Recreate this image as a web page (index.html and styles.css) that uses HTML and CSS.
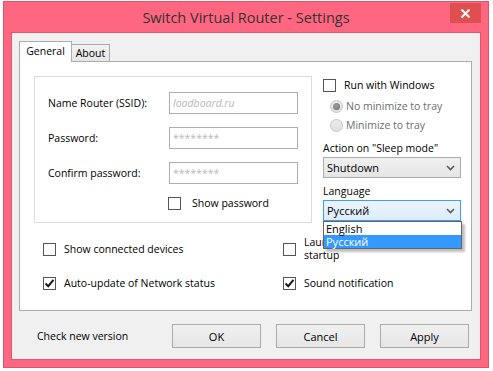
FILE: index.html
```html
<!DOCTYPE html>
<html lang="en">
<head>
  <meta charset="UTF-8" />
  <title>Switch Virtual Router - Settings</title>
  <link rel="stylesheet" href="styles.css">
</head>
<body>
  <div class="window">
    <div class="titlebar">
      <span></span>
      <span class="title">Switch Virtual Router - Settings</span>
      <button class="close-btn">
        <svg width="11" height="9" viewBox="0 0 11 9"><path d="M1.5 0.5 L9.5 8.5 M9.5 0.5 L1.5 8.5" stroke="#fff" stroke-width="2" fill="none"/></svg>
      </button>
    </div>

    <div class="client">
      <div class="tabs">
        <div class="tab active">General</div>
        <div class="tab">About</div>
      </div>

      <div class="panel">
        <div class="top-row">
          <div class="group">
            <div class="field">
              <label>Name Router (SSID):</label>
              <input type="text" class="ssid" placeholder="loadboard.ru">
            </div>
            <div class="field">
              <label>Password:</label>
              <input type="password" placeholder="********">
            </div>
            <div class="field">
              <label>Confirm password:</label>
              <input type="password" placeholder="********">
            </div>
            <div class="check show-pass">
              <span class="box"></span>
              <span>Show password</span>
            </div>
          </div>

          <div class="side">
            <div class="check">
              <span class="box"></span>
              <span>Run with Windows</span>
            </div>
            <div class="radio">
              <span class="dot checked"></span>
              <span>No minimize to tray</span>
            </div>
            <div class="radio">
              <span class="dot"></span>
              <span>Minimize to tray</span>
            </div>

            <div class="side-label">Action on "Sleep mode"</div>
            <div class="combo">
              <span>Shutdown</span>
              <svg width="9" height="6" viewBox="0 0 9 6"><path d="M1 1 L4.5 4.5 L8 1" stroke="#5a5a5a" stroke-width="1.6" fill="none"/></svg>
            </div>

            <div class="side-label lang">Language</div>
            <div class="combo-wrap">
              <div class="combo open">
                <span>Русский</span>
                <svg width="9" height="6" viewBox="0 0 9 6"><path d="M1 1 L4.5 4.5 L8 1" stroke="#5a5a5a" stroke-width="1.6" fill="none"/></svg>
              </div>
              <ul class="dropdown">
                <li>English</li>
                <li class="selected">Русский</li>
              </ul>
            </div>
          </div>
        </div>

        <div class="options">
          <div class="check">
            <span class="box"></span>
            <span>Show connected devices</span>
          </div>
          <div class="check">
            <span class="box"></span>
            <span class="launch">Launch minimized at startup</span>
          </div>
          <div class="check">
            <span class="box checked">
              <svg width="11" height="11" viewBox="0 0 11 11"><path d="M1.5 5.5 L4.2 8.2 L9.5 1.8" stroke="#1a1a1a" stroke-width="2" fill="none"/></svg>
            </span>
            <span>Auto-update of Network status</span>
          </div>
          <div class="check">
            <span class="box checked">
              <svg width="11" height="11" viewBox="0 0 11 11"><path d="M1.5 5.5 L4.2 8.2 L9.5 1.8" stroke="#1a1a1a" stroke-width="2" fill="none"/></svg>
            </span>
            <span>Sound notification</span>
          </div>
        </div>
      </div>

      <div class="footer">
        <span class="version-link">Check new version</span>
        <div class="buttons">
          <button class="btn">OK</button>
          <button class="btn">Cancel</button>
          <button class="btn">Apply</button>
        </div>
      </div>
    </div>
  </div>
</body>
</html>
```

FILE: styles.css
```css
body {
  margin: 0;
  background: #fff;
  font-family: 'Open Sans', sans-serif;
  font-size: 10.5px;
  color: #000;
}

.window {
  box-sizing: border-box;
  width: 486px;
  height: 367px;
  margin: 1px 0 0 3px;
  padding: 0 7px 7px;
  background: #ff6680;
  border: 1px solid #d9566d;
  display: flex;
  flex-direction: column;
}

.titlebar {
  height: 30px;
  display: grid;
  grid-template-columns: 1fr auto 1fr;
  align-items: center;
}

.title {
  font-size: 14.5px;
  color: #333;
  padding-top: 1px;
}

.close-btn {
  justify-self: end;
  align-self: start;
  width: 31px;
  height: 20px;
  margin-top: 1px;
  border: none;
  padding: 0;
  background: #e04f50;
  display: flex;
  align-items: center;
  justify-content: center;
}

.client {
  flex: 1;
  background: #f0f0f0;
  border: 1px solid #e0566c;
  padding: 8px 8px 0 7px;
}

/* tabs */
.tabs {
  display: flex;
  align-items: flex-end;
}

.tab {
  box-sizing: border-box;
  height: 17px;
  width: 39px;
  margin-left: -1px;
  border: 1px solid #acacac;
  border-bottom: none;
  background: linear-gradient(#f2f2f2, #e6e6e6);
  text-align: center;
  line-height: 16px;
}

.tab.active {
  position: relative;
  z-index: 1;
  height: 21px;
  width: 53px;
  margin-left: 0;
  margin-bottom: -1px;
  background: #fff;
  line-height: 18px;
}

.panel {
  box-sizing: border-box;
  height: 250px;
  background: #fff;
  border: 1px solid #acacac;
  padding: 14px 0 0 14px;
}

.top-row {
  display: flex;
  gap: 11px;
}

/* group box with the router fields */
.group {
  box-sizing: border-box;
  width: 278px;
  height: 147px;
  border: 1px solid #dcdcdc;
  padding: 15px 0 0 13px;
}

.field {
  display: flex;
  align-items: center;
  height: 22px;
  margin-bottom: 13px;
}

.field label {
  width: 121px;
}

.field input {
  box-sizing: border-box;
  width: 129px;
  height: 22px;
  border: 1px solid #abadb3;
  padding: 0 3px;
  font-family: inherit;
  font-size: 10.5px;
}

.field input::placeholder {
  color: #b9b9b9;
}

.field input.ssid::placeholder {
  font-style: italic;
}

/* checkboxes and radios */
.check {
  display: flex;
  align-items: center;
  gap: 8px;
  line-height: 13px;
}

.box {
  box-sizing: border-box;
  width: 13px;
  height: 13px;
  border: 1px solid #555;
  background: #fff;
  display: flex;
  align-items: center;
  justify-content: center;
  flex-shrink: 0;
}

.show-pass {
  margin: 13px 0 0 120px;
  gap: 11px;
}

.side {
  width: 138px;
  padding-top: 3px;
}

.radio {
  display: flex;
  align-items: center;
  gap: 3px;
  margin: 8px 0 0 7px;
  color: #6d6d6d;
  line-height: 13px;
}

.radio + .radio {
  margin-top: 6px;
}

.dot {
  box-sizing: border-box;
  width: 13px;
  height: 13px;
  border-radius: 50%;
  border: 1px solid #c4c4c4;
  background: linear-gradient(#ececec, #e0e0e0);
  display: flex;
  align-items: center;
  justify-content: center;
}

.dot.checked::after {
  content: '';
  width: 7px;
  height: 7px;
  border-radius: 50%;
  background: radial-gradient(circle at 40% 35%, #a0a0a0, #6a6a6a);
}

.side-label {
  line-height: 15px;
  margin: 9px 0 1px;
}

.side-label.lang {
  margin-top: 6px;
}

/* combo boxes */
.combo {
  box-sizing: border-box;
  height: 21px;
  border: 1px solid #acacac;
  background: linear-gradient(#f0f0f0, #e5e5e5);
  display: flex;
  align-items: center;
  justify-content: space-between;
  padding: 0 5px 0 3px;
  font-size: 11px;
}

.combo.open {
  border-color: #3c9ef0;
  background: linear-gradient(#ecf4fc, #dcecfc);
}

.combo-wrap {
  position: relative;
}

.dropdown {
  position: absolute;
  top: 100%;
  left: 0;
  z-index: 2;
  box-sizing: border-box;
  width: 139px;
  margin: 0;
  padding: 0;
  list-style: none;
  background: #fff;
  border: 1px solid #646464;
  box-shadow: 3px 3px 2px rgba(0, 0, 0, 0.25);
  font-size: 11px;
}

.dropdown li {
  height: 13px;
  line-height: 13px;
  padding-left: 2px;
}

.dropdown li.selected {
  background: #3399ff;
  color: #fff;
}

/* bottom options */
.options {
  display: grid;
  grid-template-columns: 240px 1fr;
  row-gap: 15px;
  align-items: center;
  margin: 13px 0 0 9px;
}

.launch {
  width: 130px;
}

/* footer */
.footer {
  display: flex;
  align-items: center;
  margin-top: 13px;
  padding: 0 3px 0 18px;
}

.buttons {
  margin-left: auto;
  display: flex;
  gap: 15px;
}

.btn {
  width: 89px;
  height: 24px;
  border: 1px solid #acacac;
  background: linear-gradient(#f0f0f0, #e5e5e5);
  font-family: inherit;
  font-size: 11px;
  color: #000;
}
```
